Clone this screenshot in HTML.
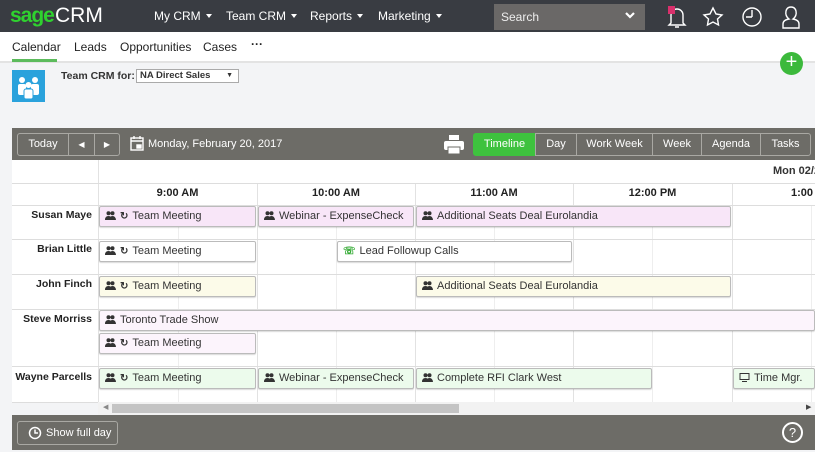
<!DOCTYPE html>
<html><head><meta charset="utf-8"><style>
*{box-sizing:border-box;margin:0;padding:0}
body{width:815px;height:452px;overflow:hidden;background:#f3f4f6;font-family:"Liberation Sans",Arial,sans-serif;position:relative;font-size:12px;color:#333}
.a{position:absolute}
.top{left:0;top:0;width:815px;height:32px;background:#393c42}
.nav{color:#fff;font-size:12px;top:9px}
.car{display:inline-block;border-left:3.5px solid transparent;border-right:3.5px solid transparent;border-top:4px solid #fff;margin-left:5px;vertical-align:2px}
.sub{left:0;top:32px;width:815px;height:31px;background:#fff;border-bottom:2px solid #e3e3e3}
.sub span{position:absolute;top:8px;font-size:12px;color:#222}
.tb{background:#6d6c67;left:12px;width:803px}
.btn{border:1px solid #a9a8a3;color:#fff;font-size:11px;text-align:center;line-height:21px;top:133px;height:23px}
.grid{left:12px;top:160px;width:803px;height:242px;background:#fff}
.vl{width:1px;background:#e2e2e2}
.hl{height:1px;background:#ddd;left:12px;width:803px}
.nm{font-weight:bold;font-size:10.5px;color:#222;right:723px;text-align:right;white-space:nowrap}
.hr{font-weight:bold;font-size:11px;color:#222;top:187px;text-align:center;white-space:nowrap}
.ev{height:21px;border:1px solid #bbb;border-radius:2px;font-size:11px;color:#333;line-height:18px;padding-left:5px;white-space:nowrap;overflow:hidden;box-shadow:0 1px 1px rgba(0,0,0,.15)}
.pp{display:inline-block;width:11px;height:9px;margin-right:4px;vertical-align:-1px}
.rf{font-size:10px;font-weight:bold;margin-right:4px}
</style></head><body>
<svg width="0" height="0" style="position:absolute"><symbol id="pp" viewBox="0 0 11 9"><circle cx="3.5" cy="2.3" r="2" fill="#333"/><circle cx="7.5" cy="2.3" r="2" fill="#333"/><path d="M0 9q0-4 3.5-4t3.5 4zM4.5 9q0-4 3-4t3.5 4z" fill="#333"/></symbol></svg>
<div class="a top"></div>
<div class="a" style="left:10px;top:4px;font-size:21px;color:#2fd12f;letter-spacing:-1px;font-weight:bold">sage</div>
<div class="a" style="left:55px;top:4px;font-size:21px;color:#fff">CRM</div>
<div class="a nav" style="left:154px">My CRM<i class="car"></i></div>
<div class="a nav" style="left:226px">Team CRM<i class="car"></i></div>
<div class="a nav" style="left:310px">Reports<i class="car"></i></div>
<div class="a nav" style="left:378px">Marketing<i class="car"></i></div>
<div class="a" style="left:494px;top:4px;width:151px;height:26px;background:#6a6867"></div>
<div class="a" style="left:501px;top:10px;color:#eee;font-size:12px">Search</div>
<svg class="a" style="left:624px;top:11px" width="12" height="10"><path d="M2 2l4 4 4-4" stroke="#fff" stroke-width="2.2" fill="none"/></svg>
<svg class="a" style="left:664px;top:4px" width="150" height="26" fill="none" stroke="#fff" stroke-width="1.4">
<path d="M7 19V11a6 6 0 0 1 12 0v8l2 2H5z M11 23h4"/>
<rect x="4" y="2" width="7" height="8" fill="#d9306c" stroke="none"/>
<path d="M49 4l3 6 6 1-4.5 4 1 6-5.5-3-5.5 3 1-6-4.5-4 6-1z"/>
<circle cx="88" cy="13" r="9"/><path d="M88 13V6M88 13h-6"/>
<path d="M119 24v-4q0-4 6-5q-4-3-3-8q1-4 5-4t5 4q1 5-3 8q6 1 6 5v4z"/>
</svg>
<div class="a sub"></div>
<div class="sub a" style="border:none;background:none">
<span style="left:12px">Calendar</span><span style="left:74px">Leads</span><span style="left:120px">Opportunities</span><span style="left:203px">Cases</span><span style="left:251px;font-weight:bold;top:5px">···</span></div>
<div class="a" style="left:12px;top:59px;width:45px;height:3px;background:#5cbb5c"></div>
<div class="a" style="left:12px;top:70px;width:33px;height:32px;background:#2aa2dc"></div>
<svg class="a" style="left:12px;top:70px" width="33" height="32" fill="#fff"><circle cx="10" cy="10" r="3"/><circle cx="23" cy="10" r="3"/><circle cx="16.5" cy="15" r="3"/><rect x="6" y="14" width="8" height="11" rx="2"/><rect x="19" y="14" width="8" height="11" rx="2"/><rect x="12" y="19" width="9" height="10" rx="2" stroke="#2aa2dc"/></svg>
<div class="a" style="left:61px;top:70px;font-size:10.5px;font-weight:bold;color:#333;white-space:nowrap">Team CRM for:</div>
<div class="a" style="left:136px;top:69px;width:103px;height:14px;border:1px solid #aaa;background:#fff;font-size:9.5px;font-weight:bold;padding-left:3px;line-height:12px">NA Direct Sales<span style="position:absolute;right:5px;font-size:7px">▼</span></div>
<div class="a" style="left:780px;top:52px;width:23px;height:23px;border-radius:50%;background:#3cb93c;color:#fff;font-size:20px;line-height:21px;text-align:center">+</div>

<div class="a tb" style="top:128px;height:32px"></div>
<div class="a btn" style="left:17px;width:52px;border-radius:3px 0 0 3px">Today</div>
<div class="a btn" style="left:68px;width:27px;font-size:8px">◀</div>
<div class="a btn" style="left:94px;width:26px;border-radius:0 3px 3px 0;font-size:8px">▶</div>
<svg class="a" style="left:130px;top:136px" width="14" height="15" fill="none" stroke="#fff" stroke-width="1.4"><rect x="1" y="2" width="12" height="12"/><path d="M1 5h12M4 0v3M10 0v3"/><rect x="7" y="9" width="4" height="3" fill="#fff"/></svg>
<div class="a" style="left:148px;top:138px;color:#fff;font-size:11px">Monday, February 20, 2017</div>
<svg class="a" style="left:443px;top:134px" width="22" height="21" fill="#fff"><rect x="6" y="1" width="10" height="5"/><rect x="1" y="7" width="20" height="9" rx="2"/><rect x="5" y="13" width="12" height="7" stroke="#6d6c67"/></svg>
<div class="a btn" style="left:473px;width:63px;background:#3ec23e;border-color:#3ec23e;border-radius:3px 0 0 3px">Timeline</div>
<div class="a btn" style="left:535px;width:42px">Day</div>
<div class="a btn" style="left:576px;width:77px">Work Week</div>
<div class="a btn" style="left:652px;width:50px">Week</div>
<div class="a btn" style="left:701px;width:60px">Agenda</div>
<div class="a btn" style="left:760px;width:51px;border-radius:0 3px 3px 0">Tasks</div>

<div class="a grid"></div>
<div class="a vl" style="left:98px;top:160px;height:242px"></div>
<div class="a vl" style="left:257px;top:183px;height:219px"></div>
<div class="a vl" style="left:415px;top:183px;height:219px"></div>
<div class="a vl" style="left:573px;top:183px;height:219px"></div>
<div class="a vl" style="left:732px;top:183px;height:219px"></div>
<div class="a vl" style="left:178px;top:205px;height:197px;background:#eee"></div>
<div class="a vl" style="left:336px;top:205px;height:197px;background:#eee"></div>
<div class="a vl" style="left:494px;top:205px;height:197px;background:#eee"></div>
<div class="a vl" style="left:652px;top:205px;height:197px;background:#eee"></div>
<div class="a vl" style="left:811px;top:205px;height:197px;background:#eee"></div>
<div class="a hl" style="top:183px"></div>
<div class="a hl" style="top:205px"></div>
<div class="a hl" style="top:239px"></div>
<div class="a hl" style="top:274px"></div>
<div class="a hl" style="top:309px"></div>
<div class="a hl" style="top:366px"></div>
<div class="a hl" style="top:402px"></div>
<div class="a" style="left:773px;top:165px;font-weight:bold;font-size:11px;white-space:nowrap">Mon 02/2</div>
<div class="a hr" style="left:98px;width:159px">9:00 AM</div>
<div class="a hr" style="left:257px;width:158px">10:00 AM</div>
<div class="a hr" style="left:415px;width:158px">11:00 AM</div>
<div class="a hr" style="left:573px;width:159px">12:00 PM</div>
<div class="a hr" style="left:791px">1:00</div>
<div class="a nm" style="top:209px">Susan Maye</div>
<div class="a nm" style="top:243px">Brian Little</div>
<div class="a nm" style="top:278px">John Finch</div>
<div class="a nm" style="top:313px">Steve Morriss</div>
<div class="a nm" style="top:371px">Wayne Parcells</div>

<div class="a ev" style="left:99px;top:206px;width:157px;background:#f8e6f8"><svg class="pp"><use href="#pp"/></svg><span class="rf">↻</span>Team Meeting</div>
<div class="a ev" style="left:258px;top:206px;width:156px;background:#f8e6f8"><svg class="pp"><use href="#pp"/></svg>Webinar - ExpenseCheck</div>
<div class="a ev" style="left:416px;top:206px;width:315px;background:#f8e6f8"><svg class="pp"><use href="#pp"/></svg>Additional Seats Deal Eurolandia</div>
<div class="a ev" style="left:99px;top:241px;width:157px;background:#fff"><svg class="pp"><use href="#pp"/></svg><span class="rf">↻</span>Team Meeting</div>
<div class="a ev" style="left:337px;top:241px;width:235px;background:#fff"><span class="rf" style="color:#3a3">☏</span>Lead Followup Calls</div>
<div class="a ev" style="left:99px;top:276px;width:157px;background:#fcfbe9"><svg class="pp"><use href="#pp"/></svg><span class="rf">↻</span>Team Meeting</div>
<div class="a ev" style="left:416px;top:276px;width:315px;background:#fcfbe9"><svg class="pp"><use href="#pp"/></svg>Additional Seats Deal Eurolandia</div>
<div class="a ev" style="left:99px;top:310px;width:716px;background:#fcf4fc"><svg class="pp"><use href="#pp"/></svg>Toronto Trade Show</div>
<div class="a ev" style="left:99px;top:333px;width:157px;background:#fcf4fc"><svg class="pp"><use href="#pp"/></svg><span class="rf">↻</span>Team Meeting</div>
<div class="a ev" style="left:99px;top:368px;width:157px;background:#ecfbec"><svg class="pp"><use href="#pp"/></svg><span class="rf">↻</span>Team Meeting</div>
<div class="a ev" style="left:258px;top:368px;width:156px;background:#ecfbec"><svg class="pp"><use href="#pp"/></svg>Webinar - ExpenseCheck</div>
<div class="a ev" style="left:416px;top:368px;width:236px;background:#ecfbec"><svg class="pp"><use href="#pp"/></svg>Complete RFI Clark West</div>
<div class="a ev" style="left:733px;top:368px;width:82px;background:#ecfbec"><svg class="pp" viewBox="0 0 11 9"><rect x="1" y="0.5" width="9" height="6" fill="none" stroke="#333"/><path d="M3 8.5h5" stroke="#333"/></svg>Time Mgr.</div>

<div class="a" style="left:98px;top:402px;width:717px;height:13px;background:#f2f2f2"></div>
<div class="a" style="left:112px;top:404px;width:347px;height:9px;background:#c4c4c4"></div>
<div class="a" style="left:103px;top:403px;font-size:7px;color:#888">◀</div>
<div class="a" style="left:806px;top:403px;font-size:7px;color:#444">▶</div>

<div class="a tb" style="top:415px;height:35px"></div>
<div class="a" style="left:17px;top:421px;width:101px;height:24px;border:1px solid #a9a8a3;border-radius:3px;color:#fff;font-size:11px;line-height:22px;padding-left:28px">Show full day</div>
<svg class="a" style="left:28px;top:426px" width="14" height="14" fill="none" stroke="#fff" stroke-width="1.5"><circle cx="7" cy="7" r="5.5"/><path d="M7 3.5V7h3"/></svg>
<div class="a" style="left:782px;top:422px;width:21px;height:21px;border:2px solid #fff;border-radius:50%;color:#fff;font-size:13px;text-align:center;line-height:17px">?</div>
</body></html>
